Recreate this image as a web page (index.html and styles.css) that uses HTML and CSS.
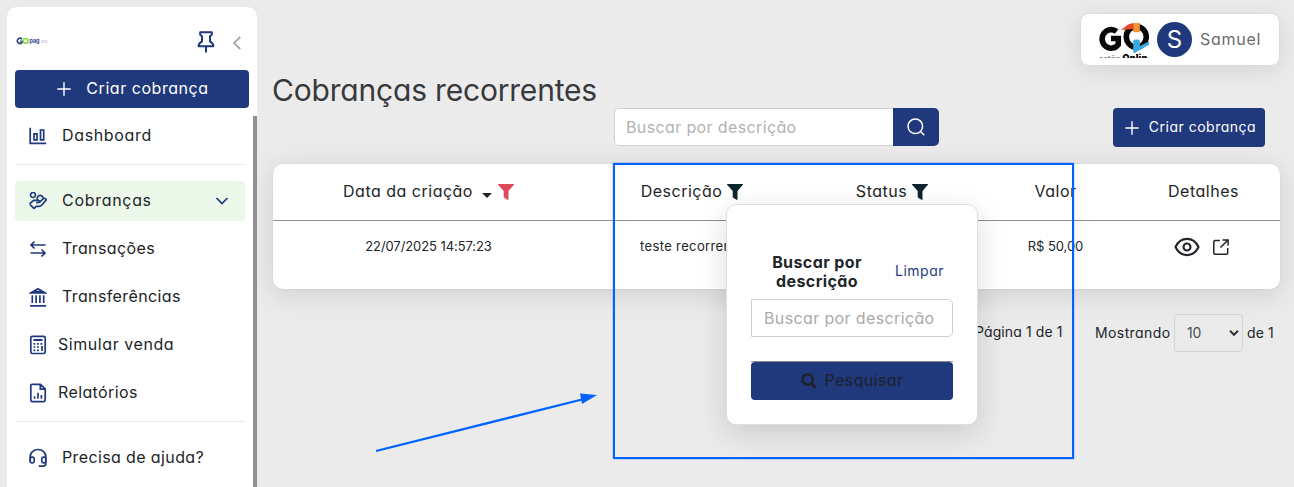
FILE: index.html
```html
<!DOCTYPE html>
<html lang="pt-BR">
<head>
<meta charset="utf-8">
<title>Cobranças recorrentes</title>
<link rel="stylesheet" href="styles.css">
</head>
<body>
<svg class="defs" width="0" height="0">
  <symbol id="plus" viewBox="0 0 14 14"><path d="M7 .3v13.4M.3 7h13.4" fill="none" stroke="currentColor" stroke-width="1.4"/></symbol>
  <symbol id="funnel" viewBox="0 0 16 16"><path d="M.3 0h15.400c.4 0 .5.5.2.8L10.500 7v8.300c0 .6-.5.8-1 .5L6.200 13.700c-.3-.2-.5-.5-.5-.8V7L.1.8C-.2.5-.1 0 .3 0z" fill="currentColor"/></symbol>
</svg>
<div class="app">
  <aside class="sidebar">
    <div class="brand">
      <svg class="brand-logo" viewBox="0 0 33 10" width="33" height="10">
        <path d="M6 3.200A2.700 2.500 0 1 0 6.100 6.400V5.300H4.300" fill="none" stroke="#34468a" stroke-width="1.700"/>
        <ellipse cx="9.700" cy="4.900" rx="2.500" ry="2.400" fill="none" stroke="#8bdc4e" stroke-width="1.500"/>
        <text x="13.500" y="6.600" class="brand-pag">pag</text>
        <path d="M25.300 4.600h6.400M25.300 6.300h6.400" stroke="#d0d0dc" stroke-width="1.200" stroke-dasharray="1.500 .4"/>
      </svg>
      <svg class="pin" viewBox="0 0 18 22" width="18" height="22" fill="none" stroke="#1f397c" stroke-width="2" stroke-linejoin="round"><path d="M3.200 1.200h11.600v2.500l-1.800 1.500v5.300c2 .8 3.200 2.200 3.400 4.700H1.600c.2-2.500 1.400-3.900 3.400-4.700V5.200L3.200 3.700zM9 15.200v6.300"/></svg>
      <svg class="collapse" viewBox="0 0 10 14" width="10" height="14" fill="none" stroke="#a8a8a8" stroke-width="1.800"><path d="M8.300 1 2 7l6.300 6"/></svg>
    </div>
    <button class="btn btn-side"><svg width="14" height="14"><use href="#plus"/></svg><span>Criar cobrança</span></button>
    <nav class="menu">
      <a class="item dash"><svg viewBox="0 0 18 18" width="18" height="18"><path d="M1.200.8v15.500h16M5 6.800h3v6H5zM11.500 3h3.200v9.800h-3.200z"/></svg><span>Dashboard</span></a>
      <hr>
      <a class="item active"><svg viewBox="0 0 18 18" width="18" height="18"><circle cx="4" cy="3" r="2.500"/><path d="M9.300 8.600a2.900 2.900 0 1 1 4.700-2M.6 11.800l4-3.500h4.500c1.800.1 1.800 2.200.2 2.300H7.200M10.300 10.400 14 6.800c1.200-1 3.700-.3 3 1.400l-4.300 5c-.9.9-1.700 1.100-2.800 1.100H7.200l-2 2M.6 12.200l4.800 4.700"/></svg><span>Cobranças</span><svg class="chev" viewBox="0 0 14 8" width="14" height="8"><path d="M1.500 1 7 6.500 12.500 1"/></svg></a>
      <a class="item"><svg viewBox="0 0 18 18" width="18" height="18"><path d="M16.500 5H2M5.500 1.500 2 5l3.500 3.500M1.500 13H16M12.500 9.500 16 13l-3.500 3.500"/></svg><span class="tight">Transações</span></a>
      <a class="item"><svg viewBox="0 0 18 20" width="18" height="20"><path d="M1 18.800h16M2 5.800 9 1.800l7 4zM6.300 4.600h5.400M3.300 8.300V16M7.100 8.300V16M10.900 8.300V16M14.700 8.300V16"/></svg><span class="tight">Transferências</span></a>
      <a class="item near"><svg viewBox="0 0 18 20" width="18" height="20"><rect x="1.800" y="1.300" width="14.400" height="17.200" rx="1.500"/><path d="M4.500 5h9" stroke-width="2"/><path d="M4.500 8.800h9M4.500 12h6M4.500 15.300h6" stroke-dasharray="1.800 1.700"/><path d="M13 11v5"/></svg><span class="wide">Simular venda</span></a>
      <a class="item near"><svg viewBox="0 0 18 20" width="18" height="20"><path d="M1.800 2.600c0-.8.5-1.300 1.300-1.300h8.400l4.700 4.600v11.400c0 .8-.5 1.300-1.300 1.300H3.100c-.8 0-1.300-.5-1.300-1.300zM11.300 1.500v4.700h4.700M5.600 13.300v2.500M9 9.800v6M12.400 12v3.800"/></svg><span class="tight">Relatórios</span></a>
      <hr>
      <a class="item"><svg viewBox="0 0 18 20" width="18" height="20"><path d="M1.200 13.500V8.800C1.200 4.500 4.500 1.500 9 1.500s7.800 3 7.800 7.300v6.500c0 1.800-.9 2.900-2.600 2.900H9.800"/><rect x="1.200" y="9.200" width="4" height="5.600" rx="1.600"/><rect x="12.800" y="9.200" width="4" height="5.600" rx="1.600"/></svg><span class="tight">Precisa de ajuda?</span></a>
    </nav>
    <div class="scrollbar"></div>
  </aside>

  <main class="main">
    <div class="user">
      <svg class="company" viewBox="0 0 50 35" width="50" height="35">
        <path d="M17.600 8.500A9 9.300 0 1 0 19.300 21.500V15.500H12" fill="none" stroke="#080808" stroke-width="5.600"/>
        <ellipse cx="37.300" cy="13.800" rx="10" ry="10.300" fill="none" stroke="#080808" stroke-width="5.600"/>
        <path d="M22 7 29 1.500 34 0v6z" fill="#e8492f"/>
        <path d="M34.200 0h6.600v9.200h-6.600z" fill="#f8942d"/>
        <path d="M34.200 29.500V18.500q0-2 2-2h2.600q2 0 2 2V23l9.200-4.500v3.300L35.500 30z" fill="#38a9e4"/>
        <text x="0" y="37.500" class="company-a">estão</text><text x="23.500" y="37.500" class="company-b">Onlin</text>
      </svg>
      <span class="avatar">S</span>
      <span class="name">Samuel</span>
    </div>
    <header class="head">
      <h1>Cobranças recorrentes</h1>
      <div class="search">
        <div class="field">Buscar por descrição</div>
        <button class="go"><svg viewBox="0 0 18 18" width="18" height="18" fill="none" stroke="#fff" stroke-width="1.500"><circle cx="8.300" cy="8.300" r="7.300"/><path d="m13.300 13.300 4 4"/></svg></button>
      </div>
      <button class="btn btn-new"><svg width="14" height="14"><use href="#plus"/></svg><span>Criar cobrança</span></button>
    </header>
    <section class="table">
      <div class="row thead">
        <div><span>Data da criação</span><i class="caret"></i><svg class="red" width="16" height="16"><use href="#funnel"/></svg></div>
        <div><span>Descrição</span><svg width="16" height="16"><use href="#funnel"/></svg></div>
        <div><span>Status</span><svg width="16" height="16"><use href="#funnel"/></svg></div>
        <div><span>Valor</span></div>
        <div><span>Detalhes</span></div>
      </div>
      <div class="row tbody">
        <div class="num"><span>22/07/2025 14:57:23</span></div>
        <div><span>teste recorrente</span></div>
        <div></div>
        <div class="num"><span>R$ 50,00</span></div>
        <div class="actions">
          <svg viewBox="0 0 26 20" width="26" height="20" fill="none" stroke="#212529" stroke-width="2.100"><path d="M1.500 10C4 4.700 8 1.900 13 1.900s9 2.800 11.500 8.100c-2.500 5.300-6.500 8.100-11.500 8.100S4 15.300 1.500 10z"/><circle cx="13" cy="10" r="3.500"/></svg>
          <svg viewBox="0 0 16 16" width="16" height="16" fill="none" stroke="#212529" stroke-width="1.500"><path d="M7 1.500H2c-.8 0-1.200.4-1.200 1.200v11.300c0 .8.4 1.200 1.200 1.200h11.500c.8 0 1.200-.4 1.200-1.200V9M9.500.9h5.600v5.600M15 1 7.500 8.500"/></svg>
        </div>
      </div>
    </section>
    <footer class="pager">
      <span class="page">Página 1 de 1</span>
      <span class="showing">Mostrando</span>
      <span class="select"><span>10</span><svg viewBox="0 0 10 8" width="10" height="8" fill="none" stroke="#333" stroke-width="2"><path d="m1 1.800 4 4 4-4"/></svg></span>
      <span class="of">de 1</span>
    </footer>
  </main>
</div>

<div class="popover">
  <div class="pop-head"><strong>Buscar por<br>descrição</strong><a>Limpar</a></div>
  <div class="pop-input">Buscar por descrição</div>
  <div class="pop-foot"><button class="btn pop-btn"><svg viewBox="0 0 16 16" width="16" height="16" fill="none" stroke="#1d222b"><circle cx="6.500" cy="6.500" r="5.200" stroke-width="2.500"/><path d="m10.200 10.200 4.800 4.800" stroke-width="3"/></svg><span>Pesquisar</span></button></div>
</div>
<div class="frame"></div>
<svg class="arrow" viewBox="0 0 230 66" width="230" height="66"><path d="M6 61 212 9.500" stroke="#0062ff" stroke-width="2.300"/><path d="M210 3.500 227 5 212 14z" fill="#0062ff"/></svg>
</body>
</html>
```
FILE: styles.css
```css
* { box-sizing: border-box; }
body {
  margin: 0;
  height: 487px;
  overflow: hidden;
  background: #ebebeb;
  color: #212529;
  font: 16px/24px Inter, "Open Sans", sans-serif;
  font-feature-settings: "cv11";
  letter-spacing: .5px;
  position: relative;
}
svg { flex: none; display: block; }
.defs { position: absolute; }
.app { display: flex; height: 487px; }
button { font: inherit; letter-spacing: inherit; font-feature-settings: inherit; border: 0; padding: 0; }

/* Optical lift for labels that sit beside icons */
.btn span, .item span, .row span, .name { padding-bottom: 2px; }

.sidebar {
  position: relative;
  width: 250px;
  margin: 7px 0 0 7px;
  padding: 0 8px;
  background: #fff;
  border-radius: 10px 10px 0 0;
  flex: none;
}
.brand { display: flex; height: 63px; padding: 24px 7px 0 1px; }
.brand-logo { margin-top: 5px; }
.brand-pag { font: bold 5.500px Inter, sans-serif; letter-spacing: -.1px; fill: #34468a; }
.pin { margin-left: 148px; }
.collapse { margin: 5px 0 0 17px; }
.btn {
  display: flex;
  align-items: center;
  justify-content: center;
  background: #1f397c;
  color: #fff;
  border-radius: 4px;
}
.btn-side { width: 234px; height: 38px; padding-left: 2px; gap: 15px; letter-spacing: .55px; }
.menu { width: 230px; }
.menu hr { margin: 8px 0 16px; border: 0; border-top: 1px solid #e8e8e8; }
.item {
  display: flex;
  align-items: center;
  height: 40px;
  margin-bottom: 8px;
  padding: 0 16px 0 14px;
  gap: 15px;
  border-radius: 4px;
}
.item svg { fill: none; stroke: #1f397c; stroke-width: 1.7; }
.item.near { gap: 11px; }
.dash { margin: 8px 0 0; letter-spacing: .65px; }
.active { background: #ecf8ea; letter-spacing: .7px; }
.tight { letter-spacing: .38px; }
.wide { letter-spacing: .56px; }
.item .chev { margin-left: auto; }
.scrollbar { position: absolute; right: 0; top: 109px; bottom: 0; width: 4px; background: #909090; }

.main { flex: 1; padding: 0 14px 0 16px; }
.user {
  display: flex;
  align-items: center;
  width: 198px;
  height: 51px;
  margin: 14px 1px 0 auto;
  padding-left: 18px;
  background: #fff;
  border-radius: 8px;
  box-shadow: 0 4px 24px rgba(0,0,0,.1), 0 0 2px rgba(0,0,0,.08);
}
.company { margin-top: 1px; }
.company-a { font: bold 7px Inter, sans-serif; fill: #777; }
.company-b { font: 900 9px Inter, sans-serif; letter-spacing: .2px; fill: #000; }
.avatar {
  width: 35px;
  height: 35px;
  margin: 0 8px;
  border-radius: 50%;
  background: #1f397c;
  color: #fff;
  font-size: 24px;
  line-height: 35px;
  text-align: center;
  letter-spacing: 0;
}
.name { color: #6c6c6c; letter-spacing: .75px; }
.head { display: flex; height: 98px; }
.head h1 {
  width: 341px;
  margin: 7px 0 0 -1px;
  font-size: 30px;
  line-height: 36px;
  font-weight: 400;
  letter-spacing: -.19px;
  color: #373a3c;
  white-space: nowrap;
}
.search { display: flex; width: 325px; height: 38px; margin: 43px 0 0 1px; }
.field { width: 279px; padding: 6px 11px; background: #fff; border: 1px solid #d2d2d2; border-right: 0; border-radius: 5px 0 0 5px; color: #b2b2b2; letter-spacing: .37px; }
.go { display: flex; width: 46px; align-items: center; justify-content: center; background: #1f397c; border-radius: 0 5px 5px 0; }
.btn-new { width: 152px; height: 39px; margin: 43px 15px 0 auto; padding-left: 3px; gap: 10px; font-size: 14px; }

.table {
  width: 1007px;
  height: 125px;
  margin-top: 1px;
  background: #fff;
  border-radius: 10px;
  box-shadow: 0 5px 28px rgba(0,0,0,.12), 0 0 2px rgba(0,0,0,.08);
}
.row { display: grid; grid-template-columns: 311px 216px 184px 143px 153px; text-align: center; }
.row > div { display: flex; justify-content: center; align-items: center; }
.thead { height: 57px; border-bottom: 1px solid #8f8f8f; }
.thead svg { color: #0f262e; margin-left: 5px; }
.thead svg.red { color: #dc4a5c; margin-left: 6px; }
.caret { margin: 7px 0 0 9px; border: 5px solid transparent; border-top-color: #212529; border-bottom: 0; }
.tbody { height: 52px; font-size: 13px; letter-spacing: .37px; }
.tbody .num { letter-spacing: -.08px; }
.tbody .actions { gap: 13px; padding-right: 4px; padding-bottom: 1px; }

.pager { display: flex; align-items: center; height: 38px; margin-top: 25px; padding-left: 702px; font-size: 14px; letter-spacing: .1px; white-space: nowrap; }
.page { width: 120px; padding-bottom: 3px; }
.showing { width: 79px; letter-spacing: .4px; }
.select { display: flex; align-items: center; justify-content: space-between; width: 69px; height: 38px; padding: 0 3px 0 12px; border: 1px solid #d3d3d3; border-radius: 4px; color: #495057; letter-spacing: -.3px; }
.of { margin-left: 4px; }

.popover {
  position: absolute;
  left: 726px;
  top: 204px;
  width: 252px;
  height: 221px;
  padding: 49px 24px 0;
  background: #fff;
  border: 1px solid #dedede;
  border-radius: 10px;
  box-shadow: 0 8px 30px rgba(0,0,0,.14);
}
.pop-head { display: flex; align-items: center; height: 36px; line-height: 19px; }
.pop-head strong { width: 132px; text-align: center; letter-spacing: .4px; }
.pop-head a { margin-left: 12px; padding-bottom: 3px; font-size: 14px; color: #263b86; }
.pop-input { height: 38px; margin-top: 9px; padding: 6px 12px; border: 1px solid #cfcfcf; border-radius: 0 5px 5px 0; color: #aaa; letter-spacing: .37px; }
.pop-foot { margin-top: 24px; border-top: 1px solid #909090; }
.pop-btn { width: 202px; height: 38px; gap: 8px; color: #1d222b; letter-spacing: .4px; }

/* Highlight annotations */
.frame { position: absolute; left: 613px; top: 163px; width: 461px; height: 296px; border: 2px solid #0062ff; box-shadow: 0 0 1px #0062ff; }
.arrow { position: absolute; left: 370px; top: 390px; }
```
